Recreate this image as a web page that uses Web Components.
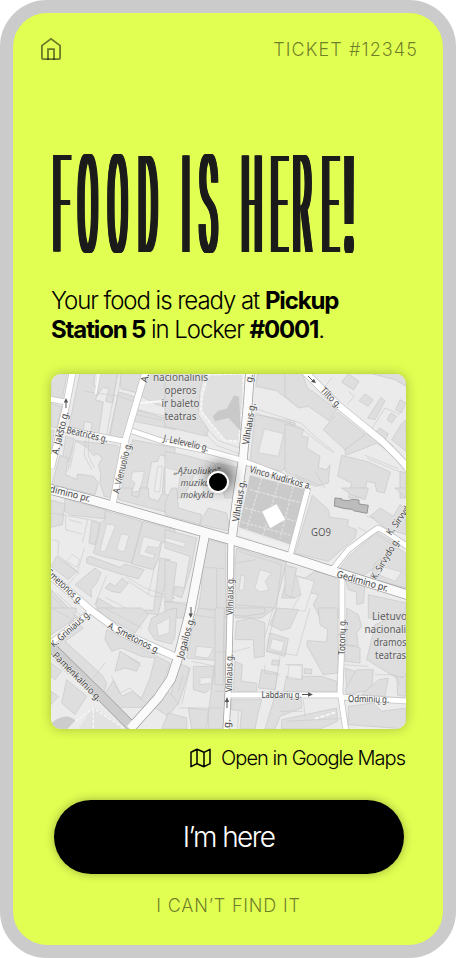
<!DOCTYPE html>
<html lang="en">
<head>
<meta charset="utf-8">
<title>Food is here</title>
<style>
html,body{margin:0;background:#fff;font-family:Inter,"Liberation Sans",sans-serif}
</style>
</head>
<body>
<pickup-screen></pickup-screen>
<script>
const define = (name, html) => customElements.define(name, class extends HTMLElement {
  constructor() {
    super();
    const t = document.createElement('template');
    t.innerHTML = html;
    this.attachShadow({ mode: 'open' }).append(t.content.cloneNode(true));
  }
});

define('top-bar', `
<style>
:host{display:flex;justify-content:space-between;align-items:center;height:24px;padding:0 25px 0 27px;color:rgba(0,0,0,.52)}
svg{display:block}
span{font-size:18px;line-height:24px;letter-spacing:1.100px;font-weight:340;padding-top:2px}
</style>
<svg width="22" height="24" viewBox="0 0 22 24" fill="none" stroke="currentColor" stroke-width="1.8"><path d="M1.900 8.600 11 1.900l9.100 6.700v12.200q0 1.300-1.300 1.300H3.200q-1.300 0-1.300-1.300Z"/><path d="M8 23V12.200h6V23"/></svg>
<span><slot></slot></span>`);

// Copies of the narrow text, side by side, give the heavy upright stems.
const stems = Array.from({ length: 17 }, (_, i) => `<use href="#t" x="${(-3.2 + i * 0.4).toFixed(1)}"/>`).join('');
define('tall-title', `
<style>
:host{display:block;height:110px}
svg{display:block;overflow:visible}
text{font-family:Roboto,"Liberation Sans",sans-serif;font-size:136px;font-weight:200;fill:#1c1c1c}
</style>
<svg width="320" height="110" viewBox="0 0 320 110">
<g id="t"><text transform="translate(0 104) scale(.2 1)" x="14 139 288 440 585 657 747 858 956 1102 1213 1358 1472">FOOD IS HERE<tspan font-weight="500">!</tspan></text></g>
${stems}
</svg>`);

define('pickup-note', `
<style>
:host{display:block;font-size:24px;line-height:29px;letter-spacing:-1.060px;font-weight:340;color:#000;white-space:nowrap}
::slotted(b){font-weight:700;letter-spacing:-1.140px}
</style><slot></slot>`);

define('street-map', `
<style>
:host{display:block;width:355px;height:355px;border-radius:10px;overflow:hidden;box-shadow:0 0 12px rgba(0,0,0,.25)}
svg{display:block}
.b polygon,.b path{fill:#dedede;stroke:#cacaca;stroke-width:2.2}
.y polygon{fill:#ececec;stroke:#cdcdcd;stroke-width:2}
.p{fill:none;stroke:#cbcbcb;stroke-width:2}
.w{fill:none;stroke:#f8f8f8;stroke-width:6}
.case,.road{fill:none;stroke-linejoin:round}
.case{stroke:#c4c4c4}.case.m{stroke:#a3a3a3}
.road{stroke:#fff}
text{font-family:"Noto Sans",sans-serif;fill:#444;stroke:#f2f2f2;stroke-width:1.200px;paint-order:stroke;stroke-linejoin:round;font-size:9.600px}
.l{font-size:10.800px;fill:#5c5c5c;stroke:#e6e6e6;text-anchor:middle}
.i{font-style:italic;font-size:9.600px}
</style>
<svg width="355" height="355" viewBox="51 374 355 355">
<defs><filter id="s" x="-150%" y="-150%" width="400%" height="400%"><feGaussianBlur stdDeviation="6"/></filter></defs>
<rect x="51" y="374" width="355" height="355" fill="#ebebeb"/>
<!-- north west blocks -->
<g transform="translate(45 368) scale(.33333)">
<g class="b">
<polygon points="18,17 66,17 52,92 18,85"/><polygon points="18,106 50,116 36,180 18,176"/><polygon points="18,186 28,188 18,250"/>
<polygon points="104,17 150,17 146,52 160,58 152,96 175,102 160,205 135,205 142,165 118,160 116,185 72,176 84,115"/>
<polygon points="165,17 218,17 202,105 182,100 192,62 174,58 156,84"/>
<polygon points="222,72 275,88 258,170 240,212 192,204 208,130"/><polygon points="225,17 290,17 278,75 228,62"/>
<polygon points="310,17 390,17 390,120 335,110 290,85"/><polygon points="275,125 390,160 390,185 268,160"/>
<polygon points="62,205 88,212 78,255 70,282 52,280"/><polygon points="92,218 214,232 232,245 205,390 178,385 164,345 168,318 160,292 172,270 158,258 145,262 128,240"/>
<polygon points="45,262 70,270 62,320 95,335 98,318 145,325 160,345 150,380 20,350"/>
<polygon points="262,215 390,240 390,275 345,260 338,280 320,282 300,390 225,390 245,280 260,250"/><polygon points="358,300 390,305 390,375 352,372"/>
</g>
<g class="y"><polygon points="262,312 298,310 292,340 282,370 260,372 270,345 258,335"/><polygon points="338,296 352,294 344,372 328,370"/></g>
<path class="p" d="M218 20 185 200M228 25 196 200M120 70 225 85 285 108M278 125 390 152M275 140 390 165M93 215 75 300M85 235 68 310M122 215 118 262 140 305M130 215 130 262 148 300"/>
<path class="w" d="M162 17 152 78M285 105 345 100 390 140"/>
</g>
<!-- theatre, museum and park -->
<g transform="translate(165 368) scale(.33333)">
<g class="b">
<polygon points="0,17 118,17 105,70 100,140 130,185 125,205 0,175"/>
<polygon points="278,17 390,17 390,110 335,68 272,55"/><polygon points="270,140 330,150 390,165 390,268 350,310 255,285"/>
<polygon points="0,250 62,262 150,286 155,310 88,320 55,390 0,390"/><polygon points="155,285 222,300 210,390 180,390"/>
</g>
<g class="y"><polygon points="298,183 356,197 340,265 280,254"/><polygon points="0,298 48,310 35,390 0,390"/></g>
<polygon points="130,20 235,17 235,95 222,220 180,218 108,130 112,80" fill="#e0e0e0" stroke="#f5f5f5" stroke-width="6" stroke-dasharray="12 3"/>
<polygon points="143,145 160,128 185,122 207,82 222,86 228,190 190,150 150,160" fill="#c9c9c9"/>
<path class="p" d="M272 122 390 160M270 135 390 172M115 190 155 232 225 258M120 175 160 218 225 240"/>
<polygon points="255,322 425,365 378,530 222,478" fill="#cacaca" stroke="#d8d8d8"/>
<path d="M290 330 245 485M340 345 295 500M385 355 345 512M240 420 400 462M255 365 410 405M230 462 390 505" fill="none" stroke="#dfdfdf" stroke-width="4" stroke-dasharray="9 4"/>
<path d="M222 492 376 545" stroke="#efefef" stroke-width="14"/>
</g>
<!-- north east -->
<g transform="translate(285 368) scale(.33333)">
<g class="b">
<polygon points="0,17 52,17 68,62 85,72 155,125 132,158 70,115 40,120 0,85"/><polygon points="158,132 240,198 222,222 180,245 115,185"/>
<polygon points="240,200 262,185 325,235 320,258 275,225 240,240 182,262 180,245"/><polygon points="190,17 222,40 205,66 170,42"/><polygon points="240,78 264,95 250,115 222,98"/>
<polygon points="288,88 300,98 270,155 248,150"/><polygon points="345,95 363,105 348,135 332,125"/><polygon points="318,135 334,145 320,165 306,155"/>
<polygon points="210,17 363,17 363,55 330,35 260,17"/><polygon points="285,180 310,198 300,215 268,195"/><polygon points="363,155 363,250 320,215 348,170"/>
<polygon points="0,168 55,185 50,205 70,208 65,240 105,265 100,300 125,305 135,290 130,345 92,355 0,310"/>
<polygon points="170,262 250,282 316,312 298,375 275,370 270,345 245,340 238,390 190,390 200,345 158,325"/><polygon points="345,310 363,315 363,390 345,390"/>
</g>
<path class="p" d="M0 152 48 165 95 210 148 252M10 165 50 180 90 215 145 255M240 262 340 302M245 270 345 312M262 180 300 120 345 140M140 30 120 55M190 70 208 85 185 110M30 320 110 355M90 310 120 360"/>
</g>
<!-- west, below the avenue -->
<g transform="translate(45 488) scale(.33333)">
<g class="b">
<polygon points="18,36 60,48 52,110 18,118"/><polygon points="60,32 182,66 178,92 80,82 58,70"/><polygon points="140,100 165,105 150,170 132,165"/>
<polygon points="182,68 292,100 260,225 172,205 145,195 160,140 165,105 180,95"/><polygon points="295,100 390,125 390,150 350,165 340,215 325,245 260,228"/>
<polygon points="345,210 375,215 340,380 295,375 300,365 325,368"/><polygon points="35,205 95,250 70,275 18,235"/><polygon points="125,210 135,205 225,238 240,228 298,245 280,272 225,258 125,225"/>
<polygon points="150,240 168,255 155,285 138,305 140,328 90,290"/><polygon points="195,285 210,295 232,270 250,285 225,315 200,310 180,300"/><polygon points="160,330 260,390 175,390 152,350"/>
<polygon points="212,0 260,0 260,22 280,28 285,0 310,0 312,30 340,40 352,15 390,30 390,80 222,35"/><polygon points="18,305 100,390 18,390"/>
</g>
<g class="y"><polygon points="228,138 252,142 238,192 215,185"/><polygon points="185,108 212,112 180,192 165,188"/><polygon points="295,145 348,160 340,180 308,175 300,192 330,200 325,212 282,200"/><polygon points="82,200 104,215 96,238 65,220"/></g>
<path class="p" d="M18 75 60 82 160 100M62 82 62 125 110 138M72 95 110 105M128 95 112 165M118 180 95 260 65 295M20 155 42 160 38 200 105 258M180 328 300 390M240 265 300 300 390 332M250 280 320 325 390 330M185 262 150 350M20 325 90 390M35 315 110 385M330 230 310 320"/>
</g>
<!-- centre, below the avenue -->
<g transform="translate(165 488) scale(.33333)">
<g class="b">
<polygon points="35,0 40,60 110,80 105,110 0,80 0,45 20,0"/><polygon points="112,90 130,60 185,75 195,130 105,110"/>
<polygon points="0,125 95,150 78,240 50,330 25,320 30,295 58,300 75,205 0,180"/><polygon points="130,155 182,168 182,390 95,390 110,300 110,240"/>
<polygon points="215,180 280,200 365,222 330,360 290,390 212,390 210,220"/><polygon points="375,235 390,240 390,330 350,330"/><polygon points="0,215 35,225 20,345 0,350"/><polygon points="0,340 65,350 60,390 0,390"/>
</g>
<g class="y"><polygon points="228,262 240,264 236,305 222,308"/><polygon points="285,245 320,255 300,280 312,305 285,312 270,300"/><polygon points="0,148 62,165 58,178 0,160"/></g>
<path class="p" d="M120 238 180 242M155 242 155 390M212 225 272 215M215 350 330 360M0 340 70 345M222 190 350 230 330 390"/>
<polygon points="290,70 335,47 362,95 315,122" fill="#fff" stroke="#c2c2c2" stroke-width="2"/>
</g>
<!-- east -->
<g transform="translate(285 488) scale(.33333)">
<g class="b">
<polygon points="82,22 130,65 135,88 190,95 188,115 215,125 210,150 130,220 30,195"/><polygon points="275,132 345,175 330,195 225,270 165,240 192,205"/><polygon points="255,85 285,60 325,85 345,50 363,62 363,140 300,120"/>
<polygon points="335,180 363,195 363,300 255,270 270,225"/><polygon points="170,0 250,0 240,35 200,20"/><polygon points="330,0 363,0 363,30"/>
<polygon points="0,232 35,240 30,262 60,270 90,250 165,270 162,390 105,390 85,350 100,320 60,310 30,330 0,320"/><polygon points="180,270 240,290 235,345 215,350 215,312 190,305"/><polygon points="250,320 363,345 363,390 250,390"/>
</g>
<polygon points="150,30 170,32 170,36 192,38 200,34 222,36 222,48 250,52 246,76 205,68 202,64 180,62 148,54" fill="#bcbcbc" stroke="#949494" stroke-width="3"/>
<g class="y"><polygon points="35,265 88,280 60,370 20,365 48,320"/><polygon points="290,235 350,252 330,280 285,262"/></g>
<path class="p" d="M30 265 18 330M218 118 262 140M260 130 330 175M245 85 270 90"/>
</g>
<!-- south west -->
<g transform="translate(45 608) scale(.33333)">
<g class="b">
<polygon points="18,0 95,0 85,35 18,80"/><polygon points="80,35 115,60 95,75 60,100 170,200 185,225 175,260 40,120 50,90"/><polygon points="185,65 240,90 345,150 375,165 350,235 295,298 225,298 175,262 205,218 230,265 262,250 290,270 315,210 330,150 290,145 230,120 200,130 180,95"/>
<polygon points="225,130 285,165 275,190 240,180 210,190"/><polygon points="320,30 370,5 395,0 390,85 380,108 330,95 310,65"/><polygon points="460,0 540,10 540,160 425,150 440,70"/><polygon points="400,165 435,180 400,290 375,270"/><polygon points="370,250 400,285 370,325 330,300"/>
<polygon points="445,175 505,175 505,235 480,255 445,245"/><polygon points="370,315 425,330 425,363 350,363"/><polygon points="510,165 540,165 540,363 490,363 490,315"/><polygon points="65,215 125,265 90,320 50,285"/><polygon points="18,165 50,190 30,215 18,205"/><polygon points="18,250 40,265 18,290"/><polygon points="155,0 290,0 310,20 270,75 180,25"/><polygon points="430,300 490,305 485,363 440,363"/>
</g>
<g class="y"><polygon points="455,115 505,120 490,150 450,145"/><polygon points="465,210 500,208 500,225 465,230"/><polygon points="335,50 375,28 372,75 340,85"/></g>
<path class="p" d="M200 205 225 255 255 240 300 285M250 145 290 175M180 165 145 210M415 200 400 250M435 180 410 290M400 300 530 300M440 160 540 180M20 150 70 200M180 0 290 60M20 0 90 40M440 20 510 30"/>
<path d="M20 345q40-35 72-8l-25 26H20z" fill="#ccc"/><polygon points="145,295 245,363 100,363" fill="#e2e2e2"/><path d="M92 340 145 300 240 363M145 305 145 363" stroke="#f8f8f8" stroke-width="4" stroke-dasharray="10 5" fill="none"/>
</g>
<!-- south east -->
<g transform="translate(215 608) scale(.33333)">
<g class="b">
<polygon points="0,0 28,0 25,120 25,230 0,230"/><polygon points="65,40 110,30 150,45 148,145 118,150 115,95 60,95"/><polygon points="60,160 82,170 78,220 125,225 125,250 55,250"/><polygon points="185,0 250,5 225,60 200,68 165,50"/>
<polygon points="165,75 220,92 210,145 155,130"/><polygon points="172,156 194,158 192,172 170,170"/><polygon points="140,185 188,195 180,245 130,240"/><polygon points="310,0 368,0 368,195 325,200 275,112 278,98 335,102 338,65 315,50"/>
<polygon points="268,182 290,184 290,198 268,196"/><polygon points="215,205 320,205 365,220 365,250 205,250"/><polygon points="395,0 430,20 440,55 425,75 430,115 395,110"/><polygon points="390,110 435,120 435,165 390,160"/>
<polygon points="480,50 600,0 572,205 545,210 455,155"/><polygon points="390,180 420,190 420,235 395,235"/><polygon points="425,185 475,185 470,245 395,260 390,245"/><polygon points="490,215 520,210 510,265 440,260"/><polygon points="545,205 572,210 572,265 548,262"/>
<polygon points="50,275 140,275 128,320 120,363 75,363 80,308 50,305"/><polygon points="178,270 260,275 260,300 195,325 180,363 150,363"/><polygon points="200,335 365,300 368,340 315,363 200,363"/><polygon points="400,295 475,285 500,310 572,300 572,363 400,350"/><polygon points="45,0 150,0 150,15 90,25 50,20"/>
</g>
<g class="y"><polygon points="172,92 208,102 200,132 164,122"/><polygon points="222,170 262,172 260,215 218,212"/></g>
<path class="p" d="M185 0 160 95 155 130 245 142 285 0M175 0 148 90M195 145 180 250M0 132 60 130 105 118M150 170 148 195 195 200M210 205 262 215 262 170 210 170M385 170 460 175M480 200 540 200 555 230M70 310 68 363M195 310 265 310M265 275 270 325M0 250 30 250M215 340 400 330"/>
<path d="M300 332 365 312" stroke="#fff" stroke-width="4" stroke-dasharray="12 5"/>
</g>
<!-- road casings -->
<g>
<g class="case"><path stroke-width="7.5" d="M73 370 65 411 51 468M146 370 125 441 112 507"/>
<path stroke-width="6.5" d="M50 399 66 402M62 429 128 442M132 431 165 442 208 451 241 460M243 461 295 481 310 488M308 488 290 556M51 643 90 612M332 570 348 550Q370 533 378 528Q384 530 408 547M342 575 342 640 340 691 346 731M228 695H341M341 697 408 701"/>
<path stroke-width="8" d="M303 370 338 405 382 441 Q402 460 409 470M50 575 92 611 122 633 176 657"/></g>
<g class="case m"><path stroke-width="9.5" d="M250 372 248 401 243 458 237 498 232 538"/><path stroke-width="7" d="M231 540 230 618 228 695 226 731"/><path stroke-width="10" d="M205 534 190 612 178 658 171 679 158 698 130 729"/><path stroke-width="10.5" d="M49 489 95 501 165 521 232 540 295 559 332 571 408 595M49 645 97 692 133 728"/></g>
</g>
<g class="road"><path stroke-width="6" d="M73 370 65 411 51 468M146 370 125 441 112 507"/>
<path stroke-width="5" d="M50 399 66 402M62 429 128 442M132 431 165 442 208 451 241 460M243 461 295 481 310 488M308 488 290 556M51 643 90 612M332 570 348 550Q370 533 378 528Q384 530 408 547M342 575 342 640 340 691 346 731M228 695H341M341 697 408 701"/>
<path stroke-width="6.5" d="M303 370 338 405 382 441 Q402 460 409 470M50 575 92 611 122 633 176 657"/>
<path stroke="#cdcdcd" stroke-width="9" d="M49 645 97 692 133 728"/>
<path stroke="#fafafa" stroke-width="8" d="M250 372 248 401 243 458 237 498 232 538"/><path stroke-width="5.5" d="M231 540 230 618 228 695 226 731"/><path stroke="#fafafa" stroke-width="8.5" d="M205 534 190 612 178 658 171 679 158 698 130 729"/><path stroke="#fafafa" stroke-width="9" d="M49 489 95 501 165 521 232 540 295 559 332 571 408 595"/></g>
<!-- one-way arrows -->
<g fill="none" stroke="#555" stroke-width="1"><path d="M66 408V401M191 607V615M227 708V699M302 694.5H310M308 376 313 381"/></g>
<g fill="#555"><path d="M66 398 63.8 402.5h4.4zM190.700 618l-2.200-4.500h4.400zM227 697l-2.200 5h4.400zM313 694.500l-5-2.200v4.400zM316 383l-5-1 3-3.200z"/></g>
<g>
<text class="l" x="180.500" y="381" textLength="55">nacionalinis</text><text class="l" x="180.500" y="394" textLength="32">operos</text><text class="l" x="180.500" y="407" textLength="38">ir baleto</text><text class="l" x="180.500" y="420" textLength="32">teatras</text>
<text class="l i" x="197" y="474" textLength="46">„Ąžuoliuko“</text><text class="l i" x="197" y="486" textLength="33">muzikos</text><text class="l i" x="197" y="498" textLength="33">mokykla</text>
<text class="l" x="321" y="536" textLength="20">GO9</text>
<text class="l" x="392" y="620" textLength="40">Lietuvos</text><text class="l" x="392" y="633" textLength="55">nacionalinis</text><text class="l" x="390" y="646" textLength="33">dramos</text><text class="l" x="390.500" y="659" textLength="31">teatras</text>
<text transform="translate(58 455) rotate(-76)" textLength="44">A. Jakšto g.</text>
<text transform="translate(66 433) rotate(13)" textLength="42">Beatričės g.</text>
<text transform="translate(119 494) rotate(-76)" textLength="52">A. Vienuolio g.</text>
<text transform="translate(147 383) rotate(-76)">A.</text>
<text transform="translate(163 441) rotate(13)" textLength="46">J. Lelevelio g.</text>
<text transform="translate(249 445) rotate(-81)" textLength="42">Vilniaus g.</text>
<text transform="translate(252 383) rotate(-82)">g.</text>
<text transform="translate(239 522) rotate(-81)" textLength="42">Vilniaus g.</text>
<text transform="translate(233 615) rotate(-89)" textLength="38">Vilniaus g.</text>
<text transform="translate(232 692) rotate(-89)" textLength="38">Vilniaus g.</text>
<text transform="translate(230 728) rotate(-88)">g.</text>
<text transform="translate(249 472) rotate(16)" textLength="64">Vinco Kudirkos a.</text>
<text transform="translate(320 391) rotate(45)" textLength="25">Tilto g.</text>
<text transform="translate(38 489) rotate(14)" textLength="53">Gedimino pr.</text>
<text transform="translate(336 577) rotate(16)" textLength="53">Gedimino pr.</text>
<text transform="translate(376 580) rotate(-59)" textLength="46">K. Sirvydo g.</text>
<text transform="translate(391 536) rotate(-54)" textLength="48">K. Sirvydo g.</text>
<text transform="translate(39 567) rotate(43)" textLength="55">A. Smetonos g.</text>
<text transform="translate(107 628) rotate(27)" textLength="57">A. Smetonos g.</text>
<text transform="translate(54 648) rotate(-42)" textLength="50">K. Griniaus g.</text>
<text transform="translate(52 656) rotate(45)" textLength="65">Pamėnkalnio g.</text>
<text transform="translate(183 659) rotate(-74)" textLength="42">Jogailos g.</text>
<text transform="translate(345 655) rotate(-89)" textLength="36">Totorių g.</text>
<text transform="translate(261.500 698)" textLength="40">Labdarių g.</text>
<text transform="translate(348 702) rotate(1)" textLength="41">Odminių g.</text>
</g>
<circle cx="220" cy="477" r="14" fill="#000" opacity=".45" filter="url(#s)"/>
<circle cx="218" cy="482" r="10" fill="#000" stroke="#fff" stroke-width="2"/>
</svg>`.replace(/textLength/g, 'lengthAdjust="spacingAndGlyphs" textLength'));

define('map-link', `
<style>
:host{display:flex;justify-content:flex-end;align-items:center;gap:10px;height:26px;font-size:20px;line-height:26px;letter-spacing:-.960px;font-weight:340;color:#000}
svg{display:block}
</style>
<svg width="21" height="20" viewBox="0 0 21 20" fill="none" stroke="#000" stroke-width="1.5" stroke-linejoin="round"><path d="M1 4.200 7 1.300l7 3 6-3v14.400l-6 3-7-3-6 3ZM7 1.300v14.400M14 4.300v14.400"/></svg>
<span><slot></slot></span>`);

define('main-button', `
<style>
:host{display:block}
button{display:flex;align-items:center;justify-content:center;width:100%;height:74px;border:0;padding:0;border-radius:37px;background:#000;color:#fff;font:340 28px/34px Inter,"Liberation Sans",sans-serif;letter-spacing:-1.600px;box-shadow:0 0 10px rgba(0,0,0,.3)}
</style><button><span><slot></slot></span></button>`);

define('text-link', `
<style>
:host{display:block;text-align:center;font-size:18px;line-height:24px;letter-spacing:.800px;font-weight:340;color:rgba(0,0,0,.52)}
</style><slot></slot>`);

define('pickup-screen', `
<style>
:host{display:block;box-sizing:border-box;width:456px;height:958px;border:13px solid #cbcbcb;border-radius:47px;background:#e1fe52;padding-top:24px}
main{display:flex;flex-direction:column;padding:0 37px 0 38px}
tall-title{margin-top:87px}
pickup-note{margin-top:28px}
street-map{margin-top:30px}
map-link{margin:16px 1px 0 0}
main-button{margin:29px 2.500px 0}
text-link{margin-top:20px}
</style>
<top-bar>TICKET #12345</top-bar>
<main>
<tall-title></tall-title>
<pickup-note>Your food is ready at <b>Pickup</b><br><b>Station 5</b> in Locker <b>#0001</b>.</pickup-note>
<street-map></street-map>
<map-link>Open in Google Maps</map-link>
<main-button>I’m here</main-button>
<text-link>I CAN’T FIND IT</text-link>
</main>`);
</script>
</body>
</html>
